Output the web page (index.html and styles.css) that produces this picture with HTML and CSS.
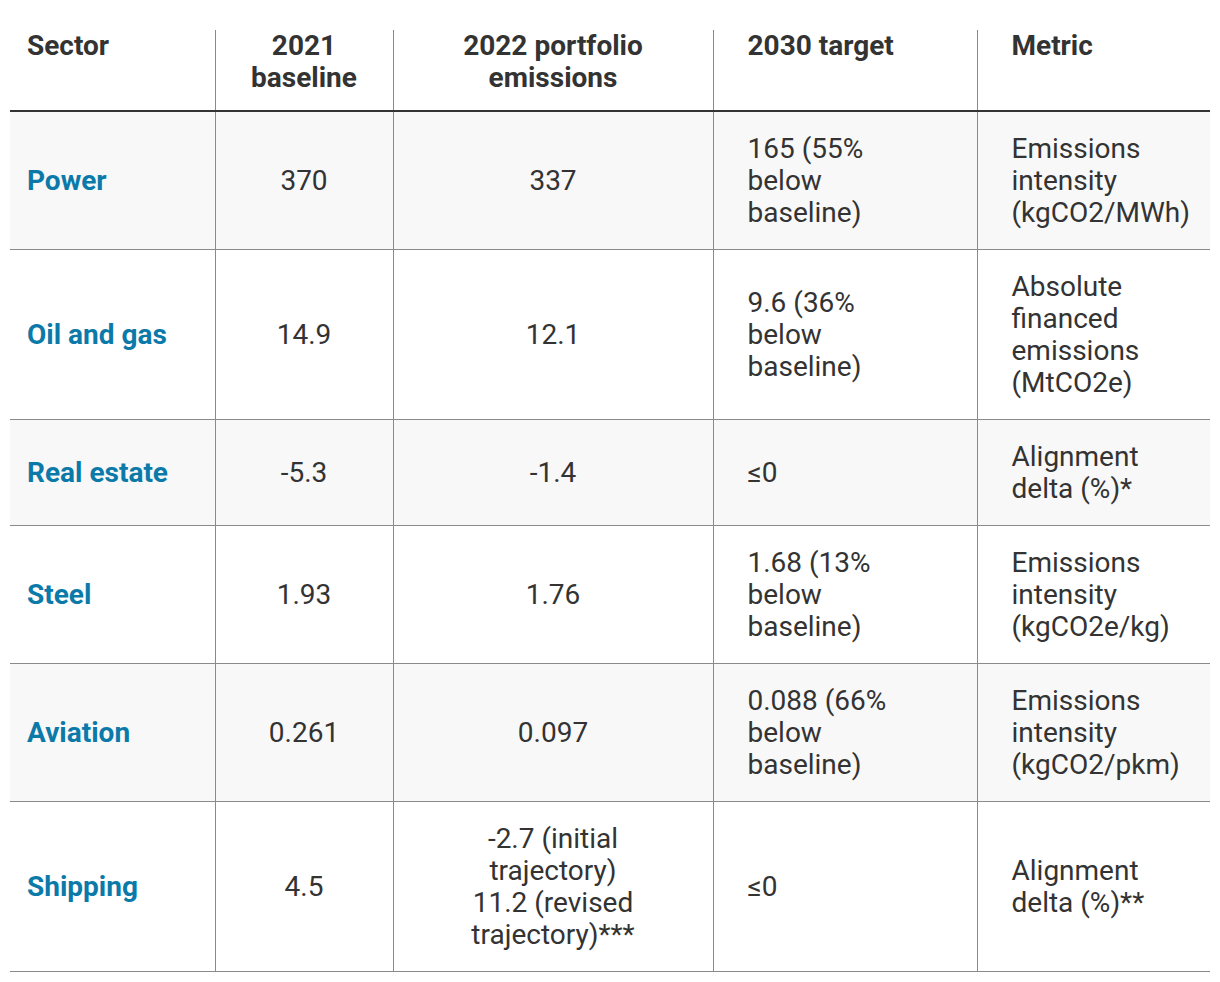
FILE: index.html
```html
<!DOCTYPE html>
<html lang="en">
<head>
<meta charset="utf-8">
<link rel="stylesheet" href="styles.css">
<title>Sector targets</title>
</head>
<body>
<table class="targets">
  <colgroup>
    <col class="c-sector"><col class="c-base"><col class="c-port"><col class="c-target"><col class="c-metric">
  </colgroup>
  <thead>
    <tr>
      <th class="left">Sector</th>
      <th class="center">2021<br>baseline</th>
      <th class="center">2022 portfolio<br>emissions</th>
      <th class="left wide">2030 target</th>
      <th class="left wide">Metric</th>
    </tr>
  </thead>
  <tbody>
    <tr class="shade">
      <td class="sector">Power</td>
      <td class="center">370</td>
      <td class="center">337</td>
      <td class="left wide">165 (55%<br>below<br>baseline)</td>
      <td class="left wide">Emissions<br>intensity<br>(kgCO2/MWh)</td>
    </tr>
    <tr>
      <td class="sector">Oil and gas</td>
      <td class="center">14.9</td>
      <td class="center">12.1</td>
      <td class="left wide">9.6 (36%<br>below<br>baseline)</td>
      <td class="left wide">Absolute<br>financed<br>emissions<br>(MtCO2e)</td>
    </tr>
    <tr class="shade">
      <td class="sector">Real estate</td>
      <td class="center">-5.3</td>
      <td class="center">-1.4</td>
      <td class="left wide">≤0</td>
      <td class="left wide">Alignment<br>delta (%)*</td>
    </tr>
    <tr>
      <td class="sector">Steel</td>
      <td class="center">1.93</td>
      <td class="center">1.76</td>
      <td class="left wide">1.68 (13%<br>below<br>baseline)</td>
      <td class="left wide">Emissions<br>intensity<br>(kgCO2e/kg)</td>
    </tr>
    <tr class="shade">
      <td class="sector">Aviation</td>
      <td class="center">0.261</td>
      <td class="center">0.097</td>
      <td class="left wide">0.088 (66%<br>below<br>baseline)</td>
      <td class="left wide">Emissions<br>intensity<br>(kgCO2/pkm)</td>
    </tr>
    <tr>
      <td class="sector">Shipping</td>
      <td class="center">4.5</td>
      <td class="center">-2.7 (initial<br>trajectory)<br>11.2 (revised<br>trajectory)***</td>
      <td class="left wide">≤0</td>
      <td class="left wide">Alignment<br>delta (%)**</td>
    </tr>
  </tbody>
</table>
</body>
</html>
```

FILE: styles.css
```css
html, body {
  margin: 0;
  padding: 0;
  background: #ffffff;
}

body {
  padding: 30px 10px 0 10px;
  font-family: Roboto, "Liberation Sans", sans-serif;
  color: #333333;
}

.targets {
  border-collapse: collapse;
  width: 1200px;
  table-layout: fixed;
  font-size: 28px;
  line-height: 32px;
}

.c-sector { width: 205px; }
.c-base { width: 178px; }
.c-port { width: 320px; }
.c-target { width: 264px; }
.c-metric { width: 233px; }

.targets th,
.targets td {
  border-left: 1px solid #8a8a8a;
  border-right: 1px solid #8a8a8a;
  padding-left: 17px;
  padding-right: 10px;
}

.targets th:first-child,
.targets td:first-child {
  border-left: none;
}

.targets th:last-child,
.targets td:last-child {
  border-right: none;
}

.targets th {
  font-weight: 700;
  vertical-align: top;
  padding-top: 0;
  padding-bottom: 16px;
  border-bottom: 2px solid #333333;
}

.targets td {
  font-weight: 400;
  vertical-align: middle;
  border-bottom: 1px solid #8a8a8a;
  padding-top: 21px;
  padding-bottom: 20px;
}

.targets .shade td {
  background: #f8f8f8;
}

.targets .left { text-align: left; }
.targets .center { text-align: center; padding-left: 10px; padding-right: 10px; }
.targets .wide { padding-left: 34px; }

.targets td.sector {
  color: #0b7aa9;
  font-weight: 700;
}
```
